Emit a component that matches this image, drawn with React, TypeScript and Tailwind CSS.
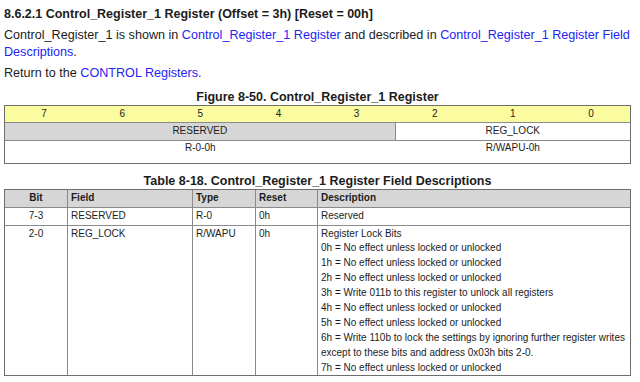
import React from "react";

const font = { fontFamily: '"Liberation Sans", Arial, sans-serif' };

const bits = ["7", "6", "5", "4", "3", "2", "1", "0"];

const descLines = [
  "0h = No effect unless locked or unlocked",
  "1h = No effect unless locked or unlocked",
  "2h = No effect unless locked or unlocked",
  "3h = Write 011b to this register to unlock all registers",
  "4h = No effect unless locked or unlocked",
  "5h = No effect unless locked or unlocked",
  "6h = Write 110b to lock the settings by ignoring further register writes",
  "except to these bits and address 0x03h bits 2-0.",
  "7h = No effect unless locked or unlocked",
];

function Link({ children }: { children: React.ReactNode }) {
  return <span className="text-[#2424f5]">{children}</span>;
}

export default function App() {
  return (
    <div className="w-[640px] h-[382px] bg-white text-[#1c1c1c] overflow-hidden" style={font}>
      <div className="pl-[4px] pr-[9px]">
        <div className="mt-[6px] h-[16px] leading-[16px] text-[12.5px] font-bold">
          8.6.2.1 Control_Register_1 Register (Offset = 3h) [Reset = 00h]
        </div>
        <div className="mt-[5px] text-[12.6px] leading-[17px]">
          Control_Register_1 is shown in <Link>Control_Register_1 Register</Link> and described in{" "}
          <Link>Control_Register_1 Register Field Descriptions</Link>.
        </div>
        <div className="mt-[4px] text-[12.6px] leading-[17px]">
          Return to the <Link>CONTROL Registers</Link>.
        </div>
        <div className="mt-[8px] h-[15px] leading-[15px] text-center text-[12.5px] font-bold">
          Figure 8-50. Control_Register_1 Register
        </div>
        <div className="grid grid-cols-8 border border-[#6e6e6e] text-[10px] leading-[12px]">
          {bits.map((b) => (
            <div
              key={b}
              className="h-[17px] bg-[#fbfb9f] flex items-center justify-center border-b border-[#8a8a8a]"
            >
              {b}
            </div>
          ))}
          <div className="col-span-5 h-[17.5px] bg-[#d6d6d6] flex items-center justify-center border-b border-r border-[#8a8a8a]">
            RESERVED
          </div>
          <div className="col-span-3 h-[17.5px] bg-white flex items-center justify-center border-b border-[#8a8a8a]">
            REG_LOCK
          </div>
          <div className="col-span-5 h-[22px] pt-[1px] flex justify-center">R-0-0h</div>
          <div className="col-span-3 h-[22px] pt-[1px] flex justify-center">R/WAPU-0h</div>
        </div>
        <div className="mt-[10px] h-[15px] leading-[15px] text-center text-[12.5px] font-bold">
          Table 8-18. Control_Register_1 Register Field Descriptions
        </div>
        <div className="grid grid-cols-[63px_125px_63px_62px_1fr] border border-[#6e6e6e] text-[10px] leading-[12px]">
          <div className="h-[18px] bg-[#d6d6d6] font-bold flex items-center justify-center border-b border-r border-[#8a8a8a]">
            Bit
          </div>
          <div className="h-[18px] bg-[#d6d6d6] font-bold flex items-center pl-[3px] border-b border-r border-[#8a8a8a]">
            Field
          </div>
          <div className="h-[18px] bg-[#d6d6d6] font-bold flex items-center pl-[3px] border-b border-r border-[#8a8a8a]">
            Type
          </div>
          <div className="h-[18px] bg-[#d6d6d6] font-bold flex items-center pl-[3px] border-b border-r border-[#8a8a8a]">
            Reset
          </div>
          <div className="h-[18px] bg-[#d6d6d6] font-bold flex items-center pl-[3px] border-b border-[#8a8a8a]">
            Description
          </div>

          <div className="h-[18px] flex items-center justify-center border-b border-r border-[#8a8a8a]">7-3</div>
          <div className="h-[18px] flex items-center pl-[3px] border-b border-r border-[#8a8a8a]">RESERVED</div>
          <div className="h-[18px] flex items-center pl-[3px] border-b border-r border-[#8a8a8a]">R-0</div>
          <div className="h-[18px] flex items-center pl-[3px] border-b border-r border-[#8a8a8a]">0h</div>
          <div className="h-[18px] flex items-center pl-[3px] border-b border-[#8a8a8a]">Reserved</div>

          <div className="h-[149px] pt-[2px] text-center border-r border-[#8a8a8a]">2-0</div>
          <div className="pt-[2px] pl-[3px] border-r border-[#8a8a8a]">REG_LOCK</div>
          <div className="pt-[2px] pl-[3px] border-r border-[#8a8a8a]">R/WAPU</div>
          <div className="pt-[2px] pl-[3px] border-r border-[#8a8a8a]">0h</div>
          <div className="pt-[2px] pl-[3px]">
            <div className="h-[12px] leading-[12px]">Register Lock Bits</div>
            {descLines.map((l, i) => (
              <div key={i} className="h-[15px] leading-[15px]">
                {l}
              </div>
            ))}
          </div>
        </div>
      </div>
    </div>
  );
}
